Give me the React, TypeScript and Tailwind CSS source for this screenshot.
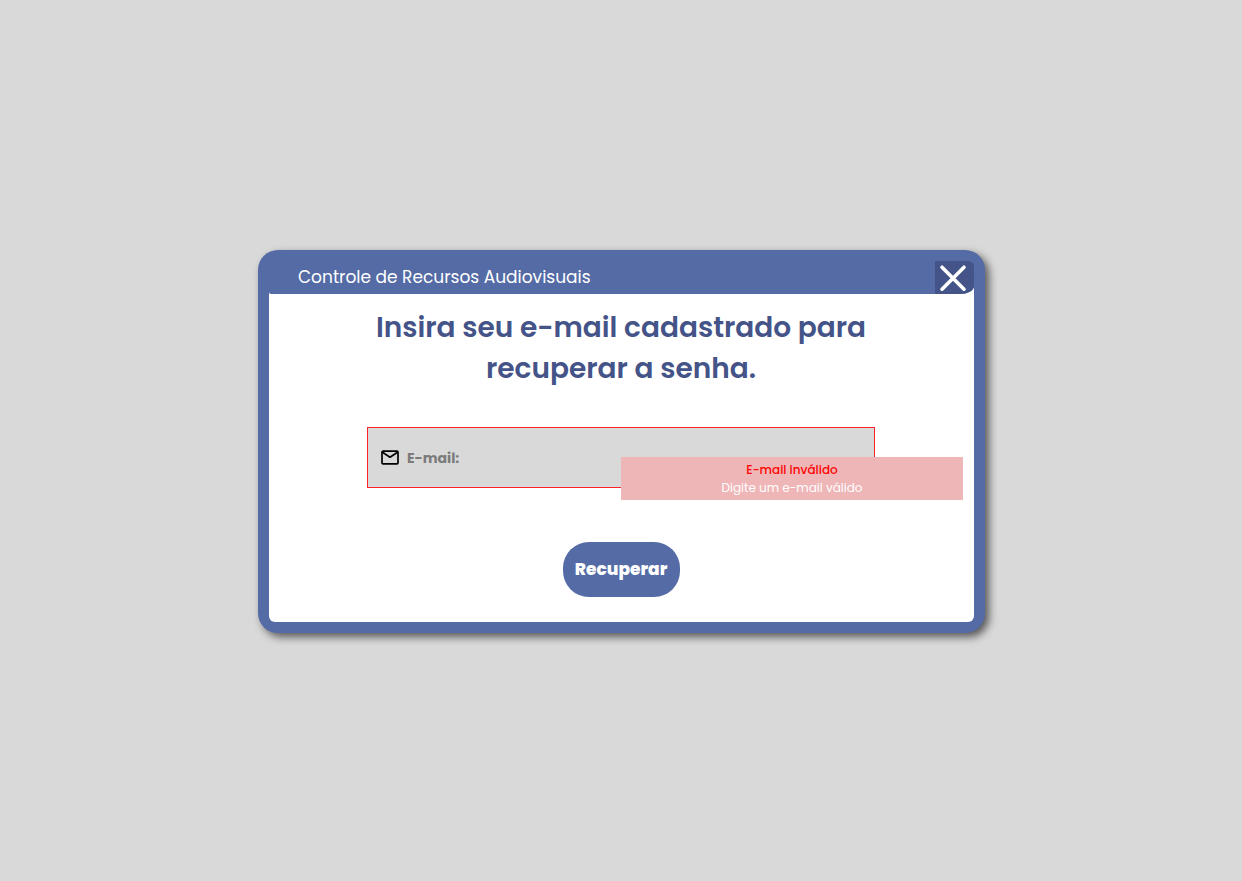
import { useState } from "react";

function MailIcon() {
  return (
    <svg viewBox="0 0 18 16" className="h-4 w-[18px] shrink-0" fill="none" stroke="#000" strokeWidth="1.7" strokeLinejoin="round" aria-hidden="true">
      <rect x="1" y="1.2" width="16" height="12.6" rx="1" />
      <path d="M1.5 2.2l7.5 5 7.5-5" />
    </svg>
  );
}

function CloseIcon() {
  return (
    <svg viewBox="0 0 28 28" className="h-7 w-7" fill="none" stroke="#fff" strokeWidth="3.6" strokeLinecap="round" aria-hidden="true">
      <path d="M3 3.2l22 22M25 3.2l-22 22" />
    </svg>
  );
}

export default function App() {
  const [email, setEmail] = useState("");

  return (
    <main className="flex min-h-screen items-center justify-center bg-[#d9d9d9] pt-0.5 pl-px font-[Poppins,Inter,sans-serif]">
      <section
        role="dialog"
        aria-labelledby="dialog-title"
        className="w-full max-w-[727px] rounded-[20px] bg-[#546ba5] p-[11px] shadow-[4px_4px_8px_rgba(0,0,0,0.6)]"
      >
        <div className="rounded-t-2xl rounded-b-md bg-white">
          <header className="flex h-[33px] items-stretch justify-between overflow-hidden rounded-tl-lg rounded-tr-md rounded-br-[14px_8px] rounded-bl-xs bg-[#546ba5] pl-[29px]">
            <h2 className="text-[17px] leading-8 text-white">Controle de Recursos Audiovisuais</h2>
            <button
              type="button"
              aria-label="Fechar"
              className="flex w-[39px] items-center justify-center bg-[#445388] pr-1"
            >
              <CloseIcon />
            </button>
          </header>

          <form noValidate onSubmit={(e) => e.preventDefault()} className="flex flex-col items-center pt-[13px] pr-[99px] pb-[25px] pl-[98px]">
            <h1 id="dialog-title" className="text-center text-[28px] leading-[41px] font-semibold text-[#445388]">
              Insira seu e-mail cadastrado para recuperar a senha.
            </h1>

            <div className="relative mt-[38px] w-full">
              <label className="flex h-[61px] items-center gap-2 border border-[#fb2226] bg-[#d9d9d9] px-[13px]">
                <MailIcon />
                <input
                  type="email"
                  aria-label="E-mail"
                  aria-invalid="true"
                  aria-describedby="email-error"
                  placeholder="E-mail:"
                  value={email}
                  onChange={(e) => setEmail(e.target.value)}
                  className="min-w-0 flex-1 bg-transparent text-sm font-bold text-[#445388] outline-none placeholder:text-[#7b7b7b]"
                />
              </label>
              <div
                id="email-error"
                role="alert"
                className="absolute top-[30px] left-1/2 h-[43px] w-[342px] bg-[#eeb6b7] pt-1 text-center text-xs leading-[18px]"
              >
                <p className="font-medium text-[#ff0505]">E-mail inválido</p>
                <p className="text-white">Digite um e-mail válido</p>
              </div>
            </div>

            <button type="submit" className="mt-[54px] h-[55px] w-[117px] rounded-[26px] bg-[#546ba5] text-[17px] font-extrabold text-white">
              Recuperar
            </button>
          </form>
        </div>
      </section>
    </main>
  );
}
